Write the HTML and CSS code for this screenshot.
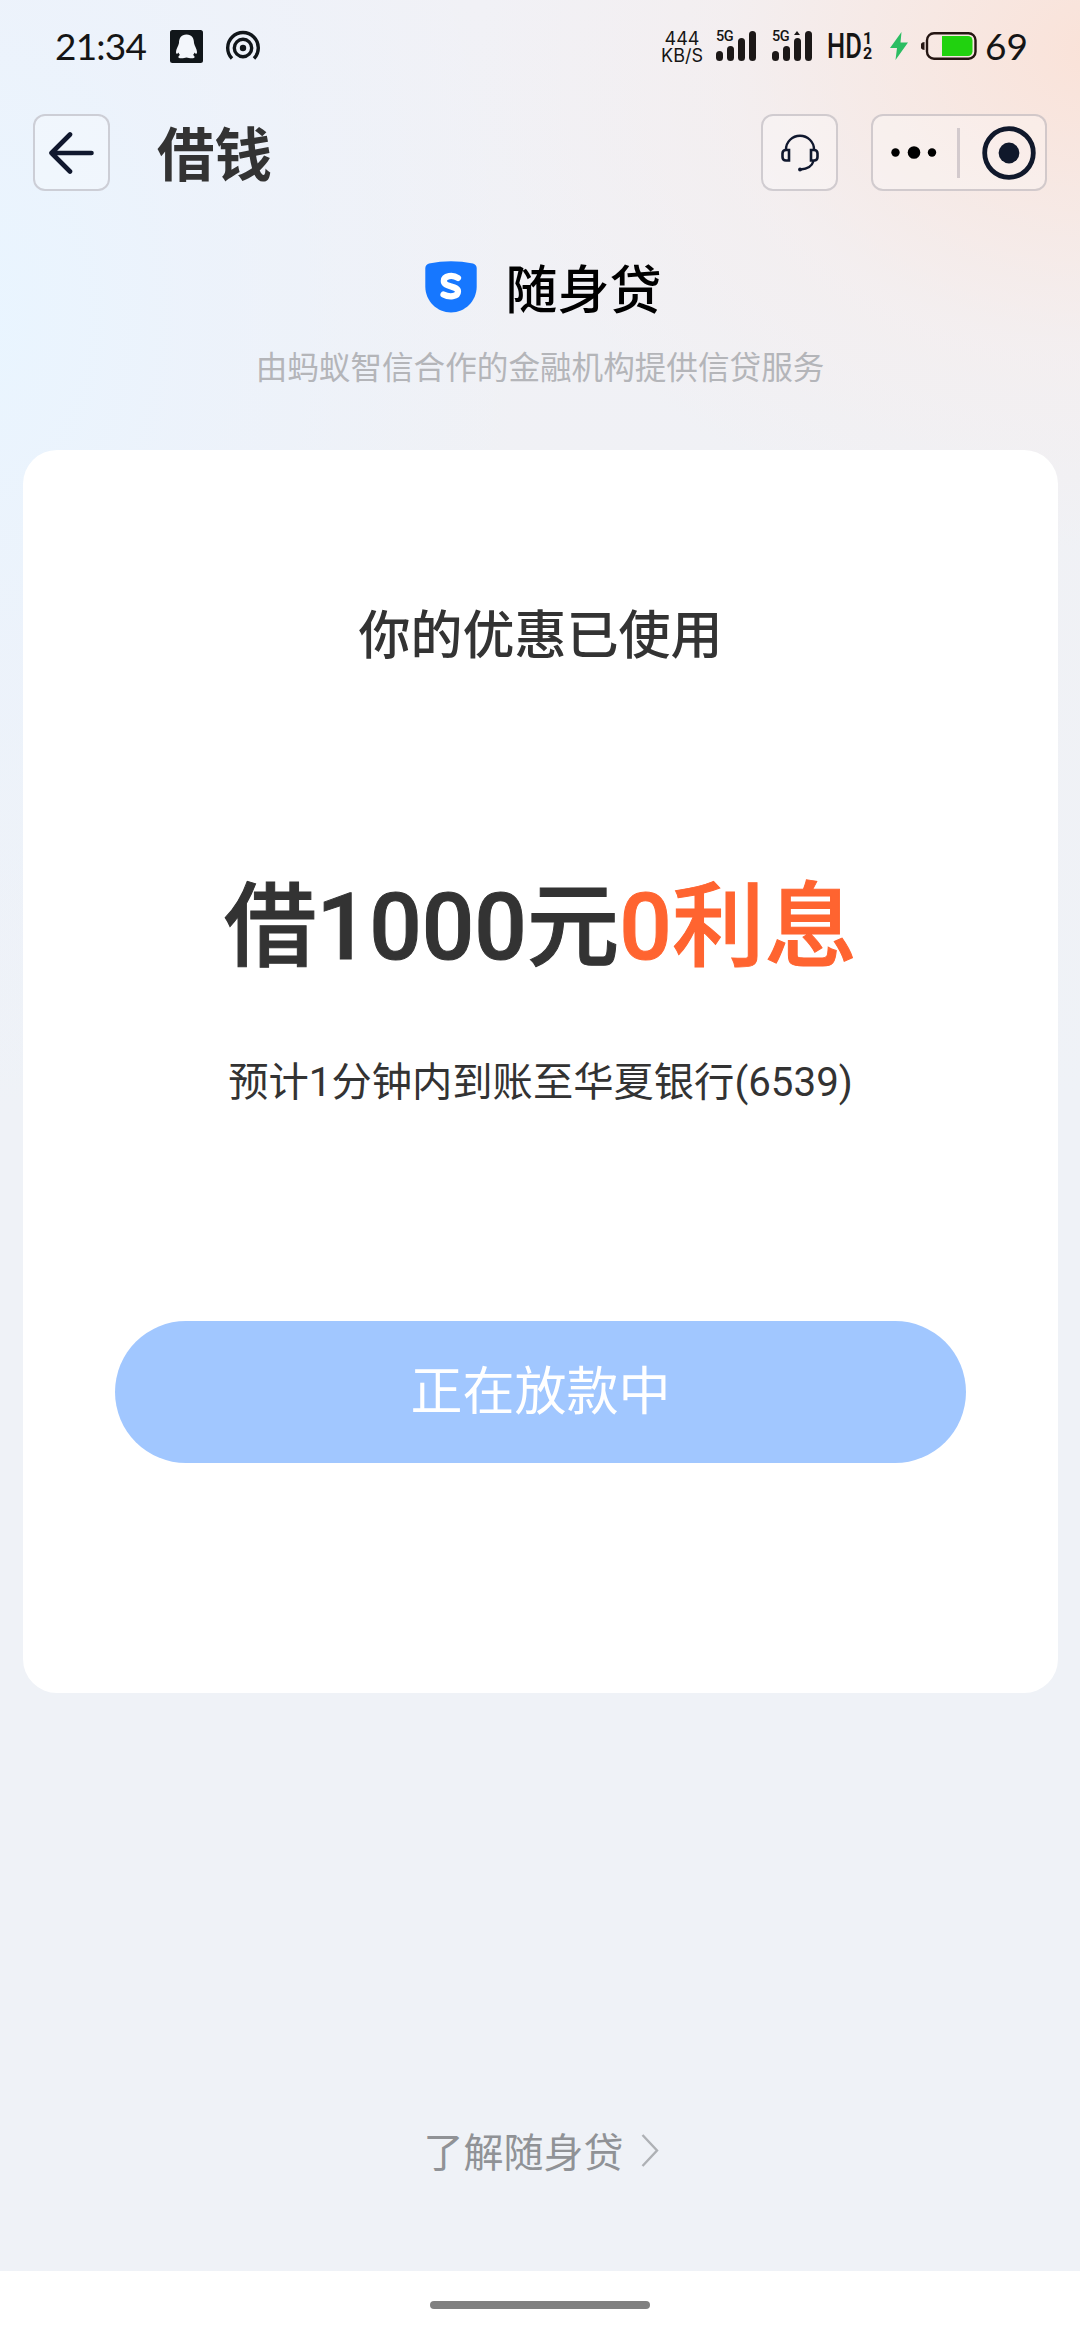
FILE: index.html
```html
<!DOCTYPE html>
<html lang="zh-CN">
<head>
<meta charset="utf-8">
<title>借钱</title>
<link rel="stylesheet" href="styles.css">
</head>
<body>
<div class="screen">
  <header class="status">
    <span class="time">21:34</span>
    <svg class="qq" width="33" height="33" viewBox="0 0 33 33"><rect width="33" height="33" rx="2.5" fill="#11161a"/><path d="M16.500 4.500C11 4.500 9 8.500 9 13C8.500 16 6 19 6 22C6 24.500 7.500 24 8.500 22.500C9 24 9.500 24.500 10 25C7.500 26.500 8 28.300 11 28.300C13.500 28.300 15 28 16.500 27.500C18 28 19.500 28.300 22 28.300C25 28.300 25.500 26.500 23 25C23.500 24.500 24 24 24.500 22.500C25.500 24 27 24.500 27 22C27 19 24.500 16 24 13C24 8.500 22 4.500 16.500 4.500Z" fill="#f3f6fb"/></svg>
    <svg class="cast" width="36" height="32" viewBox="0 0 36 32"><g fill="none" stroke="#11161a" stroke-width="3.400"><path d="M7 28.500A15.300 15.300 0 1 1 29 28.500"/><circle cx="18" cy="18" r="8.700"/></g><circle cx="18" cy="18" r="3.200" fill="#11161a"/></svg>
    <span class="spacer"></span>
    <span class="speed"><span>444</span><span>KB/S</span></span>
    <span class="signal"><b class="net">5G</b><i class="bar b1"></i><i class="bar b2"></i><i class="bar b3"></i><i class="bar b4"></i></span>
    <span class="signal"><b class="net">5G</b><i class="bar b1"></i><i class="bar b2"></i><i class="bar b3 tip"></i><i class="bar b4"></i></span>
    <span class="hd">HD</span>
    <span class="sims"><span>1</span><span>2</span></span>
    <svg class="bolt" width="18" height="28" viewBox="0 0 18 28"><path d="M11.500 0L0 16H7L5.500 28L18 10.500H10.500Z" fill="#2bbd62"/></svg>
    <svg class="battery" width="56" height="28" viewBox="0 0 56 28"><path d="M3.500 10A4 4 0 0 0 3.500 18Z" fill="#241512"/><rect x="6" y="1.200" width="48.500" height="25.500" rx="7" fill="none" stroke="#241512" stroke-width="2.400"/><path d="M21 4H47A4.500 4.500 0 0 1 51.500 8.500V19.500A4.500 4.500 0 0 1 47 24H21Z" fill="#21d20f"/></svg>
    <span class="level">69</span>
  </header>

  <nav class="nav">
    <span class="btn"><svg width="45" height="42" viewBox="0 0 45 42"><path d="M42.500 21H2.500M21 2.500L2.500 21L21 39.500" fill="none" stroke="#10182e" stroke-width="4.600" stroke-linecap="round" stroke-linejoin="round"/></svg></span>
    <h1 class="title">借钱</h1>
    <span class="spacer"></span>
    <span class="btn help"><svg width="38" height="38" viewBox="0 0 38 38" fill="none" stroke="#10182e" stroke-width="2.400"><path d="M5 16V15.500A14 13.800 0 0 1 33 15.500V16M32.500 27C31 32.500 26 35 19.500 35.500"/><path d="M8 16V26.500H5Q1.500 26.500 1.500 23V19.500Q1.500 16 5 16ZM30 16V26.500H33Q36.500 26.500 36.500 23V19.500Q36.500 16 33 16Z" stroke-width="2.600"/><circle cx="19" cy="35.500" r="1.900" fill="#10182e" stroke="none"/></svg></span>
    <span class="capsule">
      <svg width="46" height="16" viewBox="0 0 46 16"><circle cx="4.500" cy="7.500" r="4.200"/><circle cx="23" cy="7.500" r="6.300"/><circle cx="41" cy="7.500" r="4.200"/></svg>
      <i class="rule"></i>
      <svg width="54" height="54" viewBox="0 0 54 54"><circle cx="27" cy="27" r="24.300" fill="none" stroke="#10182b" stroke-width="4.800"/><circle cx="27" cy="27" r="10.400" fill="#10182b"/></svg>
    </span>
  </nav>

  <section class="brand">
    <div class="brand-row">
      <svg width="52" height="52" viewBox="0 0 52 52"><path d="M4 2.500Q26 -2 48 2.500Q51.500 3.500 51.700 7V26C51.500 40 40 51.500 26 51.500S.5 40 .3 26V7Q.5 3.500 4 2.500Z" fill="#1677ff"/><path d="M33 17C28 13.500 18.800 14.500 18.800 20C18.800 26.500 33 24.500 33 30.500C33 36 24 36.500 18.500 33.500" fill="none" stroke="#fff" stroke-width="6.200" stroke-linecap="round"/></svg>
      <span class="brand-name">随身贷</span>
    </div>
    <p class="sub">由蚂蚁智信合作的金融机构提供信贷服务</p>
  </section>

  <main class="card">
    <h2 class="used">你的优惠已使用</h2>
    <p class="amount">借1000元<em>0利息</em></p>
    <p class="eta">预计1分钟内到账至华夏银行(6539)</p>
    <div class="cta">正在放款中</div>
  </main>

  <div class="learn"><span>了解随身贷</span><svg width="18" height="33" viewBox="0 0 18 33"><path d="M1.500 1L16 16.500L1.500 32" fill="none" stroke="#aeb1b5" stroke-width="2.400"/></svg></div>
  <footer class="home"><i></i></footer>
</div>
</body>
</html>
```
FILE: styles.css
```css
* { box-sizing: border-box; margin: 0; padding: 0; }
body { width: 1080px; height: 2340px; font-family: Roboto, "Noto Sans CJK SC", sans-serif; color: #333; overflow: hidden; }
svg { display: block; flex: none; }
i, em { font-style: normal; }
.screen {
  width: 1080px; height: 2340px; display: flex; flex-direction: column;
  background:
    radial-gradient(ellipse 620px 500px at 1100px 50px, #fae2d8 0%, rgba(249,229,221,.75) 28%, rgba(246,236,234,.5) 60%, rgba(243,240,241,0) 100%),
    radial-gradient(ellipse 540px 800px at -20px 320px, #e9f5ff 0%, rgba(235,243,253,.75) 40%, rgba(239,242,248,0) 100%),
    linear-gradient(#f1f1f6 0, #f0f1f5 500px, #eff2f7 1100px);
}
.spacer { flex: 1; }

.status { height: 92px; display: flex; align-items: flex-start; padding: 30px 54px 0 55px; color: #151515; }
.time { font: 37px/37px Lato, sans-serif; width: 94px; white-space: nowrap; letter-spacing: -.8px; margin-top: -3px; }
.qq { margin-left: 21px; }
.cast { margin: 0 0 0 22px; }
.speed { display: flex; flex-direction: column; align-items: center; width: 44px; font: 18px/17px Inter, sans-serif; white-space: nowrap; margin-right: 2px; }
.signal { display: flex; align-items: flex-end; gap: 4px; width: 40px; height: 31px; margin-left: 10px; position: relative; }
.signal + .signal { margin-left: 16px; }
.net { position: absolute; left: 0; top: 1px; font: 500 14.500px/12px Roboto, sans-serif; letter-spacing: -.5px; }
.bar { width: 7px; border-radius: 3.500px; background: #1c1817; }
.b1 { height: 10px; } .b2 { height: 15px; } .b3 { height: 23px; } .b4 { height: 30px; }
.tip { position: relative; }
.tip::before { content: ""; position: absolute; left: 0; top: -7px; border: solid transparent; border-width: 0 3.500px 4px; border-bottom-color: #1c1817; }
.hd { font: 500 35px/35px Roboto, sans-serif; width: 35px; margin-left: 15px; margin-top: -1px; transform: scaleX(.73); transform-origin: left; white-space: nowrap; }
.sims { display: flex; flex-direction: column; width: 10px; font: 700 16px/15px Roboto, sans-serif; margin-left: 1px; margin-top: 1px; }
.bolt { margin: 2px 0 0 17px; }
.battery { margin: 2px 0 0 13px; }
.level { font: 37px/37px Lato, sans-serif; margin: -3px 0 0 8px; width: 41px; }

.nav { height: 122px; padding: 22px 33px 0; display: flex; align-items: flex-start; }
.btn, .capsule { height: 77px; border: 2px solid rgba(150,145,155,.4); border-radius: 12px; background: rgba(255,255,255,.28); display: flex; align-items: center; }
.btn { width: 77px; justify-content: center; }
.title { font: 700 57.500px/77px "Noto Sans CJK SC", sans-serif; margin-left: 47px; margin-top: -1px; }
.help { margin-right: 33px; }
.capsule { width: 176px; padding: 0 9px 0 18px; justify-content: space-between; }
.rule { width: 3px; height: 50px; background: #d3cacd; margin-left: 10px; margin-right: 12px; }

.brand { height: 236px; display: flex; flex-direction: column; align-items: center; padding-top: 34px; }
.brand-row { display: flex; height: 78px; align-items: center; gap: 28px; padding-left: 7px; }
.brand-name { font: 500 52px/78px "Noto Sans CJK SC", sans-serif; color: #000; }
.sub { font: 31.600px/48px "Noto Sans CJK SC", sans-serif; color: #b4b5b9; margin-top: 15px; white-space: nowrap; }

.card { margin: 0 22px 0 23px; height: 1243px; border-radius: 34px; background: #fff; display: flex; flex-direction: column; align-items: center; padding-top: 143px; }
.used { font: 500 52px/78px "Noto Sans CJK SC", sans-serif; }
.amount { font-size: 92.500px; font-weight: 500; line-height: 140px; height: 140px; margin-top: 187px; white-space: nowrap; -webkit-text-stroke: 1px currentColor; }
.amount em { color: #ff6430; }
.eta { font-size: 40.300px; line-height: 60px; margin-top: 55px; white-space: nowrap; }
.cta { width: 851px; height: 142px; border-radius: 71px; background: #a1c7ff; color: #fff; margin-top: 208px; font: 52px/134px "Noto Sans CJK SC", sans-serif; text-align: center; }

.learn { flex: 1; display: flex; justify-content: center; align-items: flex-start; gap: 17px; padding: 427px 0 0 2px; font: 40px/60px "Noto Sans CJK SC", sans-serif; color: #909296; }
.learn svg { margin-top: 14px; }
.home { height: 69px; background: #fff; display: flex; justify-content: center; padding-top: 30px; }
.home i { width: 220px; height: 8px; border-radius: 4px; background: #808080; }
```
